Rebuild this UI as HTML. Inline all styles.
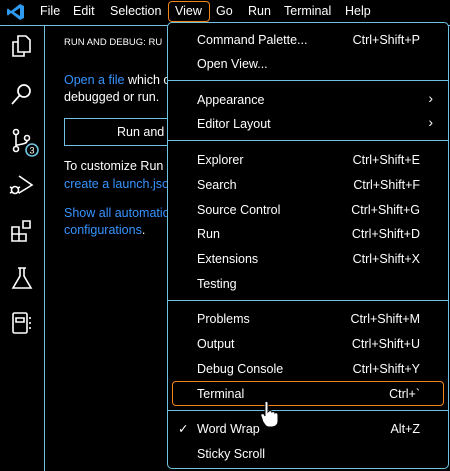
<!DOCTYPE html>
<html><head><meta charset="utf-8"><style>
*{margin:0;padding:0;box-sizing:border-box}
body{width:450px;height:471px;background:#000;overflow:hidden;position:relative;font-family:"Segoe UI","Liberation Sans",sans-serif;color:#fff;font-size:12.5px}
.abs{position:absolute;white-space:nowrap}
.tb{top:4px;font-size:12.5px}
.link{color:#3794ff}
.menu{position:absolute;left:167px;top:22px;width:282px;height:447px;border:1px solid #6fc3df;border-radius:5px;background:#000}
.it{position:absolute;left:29px;font-size:12.5px;line-height:16px}
.sc{position:absolute;right:28px;font-size:12.5px;line-height:16px}
.sep{position:absolute;left:0;right:0;height:1px;background:#6fc3df}
svg{position:absolute}
</style></head><body>
<div style="position:absolute;left:0;top:25px;width:450px;height:1px;background:#6fc3df"></div>
<div style="position:absolute;left:44px;top:25px;width:1px;height:446px;background:#6fc3df"></div>
<svg style="left:7px;top:3px" width="18" height="18" viewBox="0 0 18 18"><path d="M13 1 L17 3 V15 L13 17 L4 10 L1 12.5 L0 11.5 V6.5 L1 5.5 L4 8 Z M13 5 L7 9 L13 13 Z" fill="#2f9bf0"/></svg>
<div class="abs tb" style="left:40px">File</div>
<div class="abs tb" style="left:73px">Edit</div>
<div class="abs tb" style="left:110px">Selection</div>
<div style="position:absolute;left:168px;top:1px;width:42px;height:21px;border:1px solid #f38518;border-radius:4px"></div>
<div class="abs tb" style="left:175px">View</div>
<div class="abs tb" style="left:216px">Go</div>
<div class="abs tb" style="left:248px">Run</div>
<div class="abs tb" style="left:284px">Terminal</div>
<div class="abs tb" style="left:345px">Help</div>

<svg style="left:10px;top:34px" width="24" height="26" viewBox="0 0 24 26" fill="none" stroke="#fff" stroke-width="1.6"><path d="M8 2h8l4 4v12H8z"/><path d="M8 8H3v14h11v-4"/></svg>
<svg style="left:10px;top:82px" width="24" height="26" viewBox="0 0 24 26" fill="none" stroke="#fff" stroke-width="1.7"><circle cx="14" cy="9" r="6"/><path d="M10 13L2 22"/></svg>
<svg style="left:10px;top:127px" width="30" height="30" viewBox="0 0 30 30" fill="none" stroke="#fff" stroke-width="1.6"><circle cx="6" cy="5" r="2.5"/><circle cx="6" cy="22" r="2.5"/><circle cx="17" cy="11" r="2.5"/><path d="M6 8v11M17 14c0 4-11 3-11 5"/><circle cx="22" cy="23" r="6" fill="#000" stroke="#6fc3df"/><text x="22" y="26.5" font-size="9" fill="#fff" stroke="none" text-anchor="middle" font-family="Liberation Sans">3</text></svg>
<svg style="left:9px;top:172px" width="26" height="26" viewBox="0 0 26 26" fill="none" stroke="#fff" stroke-width="1.6"><path d="M10 4l13 9-13 8"/><circle cx="6" cy="18" r="3.5"/><path d="M1 15l2 1M1 21l2-1M11 15l-2 1M11 21l-2-1"/></svg>
<svg style="left:10px;top:219px" width="26" height="26" viewBox="0 0 26 26" fill="none" stroke="#fff" stroke-width="1.6"><path d="M2 8h7v7H2zM9 15h7v7H9zM2 15h7v7H2z"/><path d="M13 2h7v7h-7z"/></svg>
<svg style="left:10px;top:266px" width="24" height="26" viewBox="0 0 24 26" fill="none" stroke="#fff" stroke-width="1.6"><path d="M8 2h8M10 2v8L3 22h18L14 10V2"/></svg>
<svg style="left:10px;top:311px" width="24" height="26" viewBox="0 0 24 26" fill="none" stroke="#fff" stroke-width="1.6"><rect x="3" y="2" width="14" height="20" rx="1.5"/><path d="M6 7h8v4H6z"/><path d="M20 6v2M20 11v2M20 16v2"/></svg>

<div class="abs" style="left:64px;top:37px;font-size:9.5px">RUN AND DEBUG: RU</div>
<div class="abs" style="left:64px;top:73px"><span class="link">Open a file</span> which c</div>
<div class="abs" style="left:64px;top:90px">debugged or run.</div>
<div style="position:absolute;left:64px;top:118px;width:120px;height:28px;border:1px solid #6fc3df"></div>
<div class="abs" style="left:117px;top:125px">Run and</div>
<div class="abs" style="left:64px;top:159px">To customize Run a</div>
<div class="abs link" style="left:64px;top:177px">create a launch.json</div>
<div class="abs link" style="left:64px;top:206px">Show all automatio</div>
<div class="abs" style="left:64px;top:223px"><span class="link">configurations</span>.</div>

<div class="menu">
<div class="it" style="top:9px">Command Palette...</div><div class="sc" style="top:9px">Ctrl+Shift+P</div>
<div class="it" style="top:33px">Open View...</div>
<div class="sep" style="top:57px"></div>
<div class="it" style="top:69px">Appearance</div><div class="sc" style="top:67px;right:15px;font-size:14px">›</div>
<div class="it" style="top:93px">Editor Layout</div><div class="sc" style="top:91px;right:15px;font-size:14px">›</div>
<div class="sep" style="top:117px"></div>
<div class="it" style="top:129px">Explorer</div><div class="sc" style="top:129px">Ctrl+Shift+E</div>
<div class="it" style="top:154px">Search</div><div class="sc" style="top:154px">Ctrl+Shift+F</div>
<div class="it" style="top:179px">Source Control</div><div class="sc" style="top:179px">Ctrl+Shift+G</div>
<div class="it" style="top:203px">Run</div><div class="sc" style="top:203px">Ctrl+Shift+D</div>
<div class="it" style="top:228px">Extensions</div><div class="sc" style="top:228px">Ctrl+Shift+X</div>
<div class="it" style="top:253px">Testing</div>
<div class="sep" style="top:277px"></div>
<div class="it" style="top:288px">Problems</div><div class="sc" style="top:288px">Ctrl+Shift+M</div>
<div class="it" style="top:313px">Output</div><div class="sc" style="top:313px">Ctrl+Shift+U</div>
<div class="it" style="top:338px">Debug Console</div><div class="sc" style="top:338px">Ctrl+Shift+Y</div>
<div style="position:absolute;left:4px;top:358px;width:272px;height:25px;border:1px solid #f38518;border-radius:4px"></div>
<div class="it" style="top:363px">Terminal</div><div class="sc" style="top:363px">Ctrl+`</div>
<div class="sep" style="top:387px"></div>
<div class="it" style="top:398px;left:10px">✓</div>
<div class="it" style="top:398px">Word Wrap</div><div class="sc" style="top:398px">Alt+Z</div>
<div class="it" style="top:423px">Sticky Scroll</div>
</div>
<svg style="left:259px;top:400px" width="22" height="28" viewBox="0 0 22 28"><path d="M6 2c1-1 3-1 3 1v9l1-1c1-1 3 0 3 1 1-1 3 0 3 1 1-1 3 0 3 2v6c0 4-3 6-6 6h-3c-3 0-4-2-6-5L2 16c-1-2 1-3 3-2l1 2z" fill="#fff" stroke="#000" stroke-width="1"/></svg>
</body></html>
